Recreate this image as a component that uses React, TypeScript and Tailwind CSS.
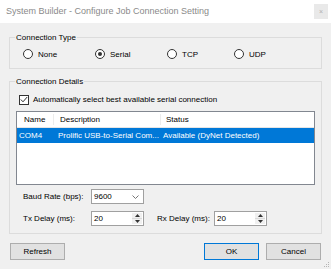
import type { ReactNode } from 'react';

function Radio({ label, checked }: { label: string; checked?: boolean }) {
  return (
    <div className="flex items-center gap-[5px]">
      <span className="flex h-[10px] w-[10px] items-center justify-center rounded-full border border-[#333] bg-white">
        {checked && <span className="h-[4px] w-[4px] rounded-full bg-[#333]" />}
      </span>
      <span>{label}</span>
    </div>
  );
}

function Group({ title, className, children }: { title: string; className?: string; children: ReactNode }) {
  return (
    <div className={`relative mx-[9px] border border-[#dcdcdc] ${className ?? ''}`}>
      <span className="absolute -top-[6px] left-[5px] bg-[#f0f0f0] px-[1px] leading-[11px]">{title}</span>
      {children}
    </div>
  );
}

function Spinner({ value }: { value: string }) {
  return (
    <div className="flex h-[15px] w-[53px] border border-[#a0a0a0] bg-white">
      <span className="flex-1 pl-[2px] leading-[13px]">{value}</span>
      <div className="my-[1px] mr-[1px] flex w-[10px] flex-col bg-[#f0f0f0]">
        <div className="flex flex-1 items-center justify-center border-b border-[#dadada]">
          <svg width="5" height="3" viewBox="0 0 5 3"><path d="M0 3 L2.5 0 L5 3Z" fill="#333" /></svg>
        </div>
        <div className="flex flex-1 items-center justify-center">
          <svg width="5" height="3" viewBox="0 0 5 3"><path d="M0 0 L2.5 3 L5 0Z" fill="#333" /></svg>
        </div>
      </div>
    </div>
  );
}

function Button({ label, primary, className }: { label: string; primary?: boolean; className?: string }) {
  return (
    <div
      className={`flex h-[17px] w-[55px] items-center justify-center bg-[#e1e1e1] ${
        primary ? 'border-[1.5px] border-[#0078d7]' : 'border border-[#adadad]'
      } ${className ?? ''}`}
    >
      {label}
    </div>
  );
}

export default function App() {
  return (
    <div
      className="relative flex h-[269px] w-[331px] flex-col bg-[#f0f0f0] text-[8px] leading-[11px] text-black"
      style={{ fontFamily: '"Liberation Sans", Arial, sans-serif' }}
    >
      <div className="flex h-[23px] shrink-0 items-center justify-between bg-white pl-[6px] pr-[3px]">
        <span className="text-[9px] text-[#8a8a8a]">System Builder - Configure Job Connection Setting</span>
        <div className="flex h-[15px] w-[14px] items-center justify-center bg-[#e9e9e9] text-[7px] text-[#b0b0b0]">×</div>
      </div>

      <Group title="Connection Type" className="mt-[14px] h-[32px] shrink-0">
        <div className="flex h-full items-center pt-[2px]">
          <div className="ml-[13px] w-[72px]"><Radio label="None" /></div>
          <div className="w-[72px]"><Radio label="Serial" checked /></div>
          <div className="w-[67px]"><Radio label="TCP" /></div>
          <Radio label="UDP" />
        </div>
      </Group>

      <Group title="Connection Details" className="mt-[12px] h-[153px] shrink-0">
        <div className="ml-[9px] mt-[12px] flex items-center gap-[4px]">
          <span className="flex h-[10px] w-[10px] items-center justify-center border border-[#333] bg-white">
            <svg width="8" height="7" viewBox="0 0 8 7"><path d="M0.8 3.5 L3 5.8 L7.2 1" stroke="#333" strokeWidth="1" fill="none" /></svg>
          </span>
          <span>Automatically select best available serial connection</span>
        </div>

        <div className="mx-[6px] mt-[6px] h-[74px] border border-[#828790] bg-white">
          <div className="flex h-[16px] items-center border-b border-[#e5e5e5]">
            <span className="w-[37px] border-r border-[#ececec] pl-[7px]">Name</span>
            <span className="w-[107px] border-r border-[#ececec] pl-[6px]">Description</span>
            <span className="pl-[5px]">Status</span>
          </div>
          <div className="flex h-[15px] items-center bg-[#0078d7] text-white">
            <span className="w-[39px] pl-[2px]">COM4</span>
            <span className="w-[105px] whitespace-nowrap pl-[2px]">Prolific USB-to-Serial Com...</span>
            <span className="pl-[2px]">Available (DyNet Detected)</span>
          </div>
        </div>

        <div className="mt-[4px] flex items-center">
          <span className="w-[81px] whitespace-nowrap pl-[13px]">Baud Rate (bps):</span>
          <div className="flex h-[15px] w-[53px] items-center justify-between border border-[#a0a0a0] bg-white pl-[2px] pr-[4px]">
            <span>9600</span>
            <svg width="7" height="4" viewBox="0 0 7 4"><path d="M0.5 0.5 L3.5 3.5 L6.5 0.5" stroke="#777" fill="none" /></svg>
          </div>
        </div>

        <div className="mt-[7px] flex items-center">
          <span className="w-[81px] whitespace-nowrap pl-[13px]">Tx Delay (ms):</span>
          <Spinner value="20" />
          <span className="w-[70px] whitespace-nowrap pl-[13px]">Rx Delay (ms):</span>
          <Spinner value="20" />
        </div>
      </Group>

      <div className="mt-[9px] flex px-[10px]">
        <Button label="Refresh" />
        <div className="flex-1" />
        <Button label="OK" primary />
        <Button label="Cancel" className="ml-[7px]" />
      </div>

      {/* size grip */}
      <svg className="absolute bottom-[1px] right-[1px]" width="6" height="6" viewBox="0 0 6 6">
        <rect x="4" y="0" width="1" height="1" fill="#b5b5b5" />
        <rect x="2" y="2" width="1" height="1" fill="#b5b5b5" />
        <rect x="4" y="2" width="1" height="1" fill="#b5b5b5" />
        <rect x="0" y="4" width="1" height="1" fill="#b5b5b5" />
        <rect x="2" y="4" width="1" height="1" fill="#b5b5b5" />
        <rect x="4" y="4" width="1" height="1" fill="#b5b5b5" />
      </svg>
    </div>
  );
}
